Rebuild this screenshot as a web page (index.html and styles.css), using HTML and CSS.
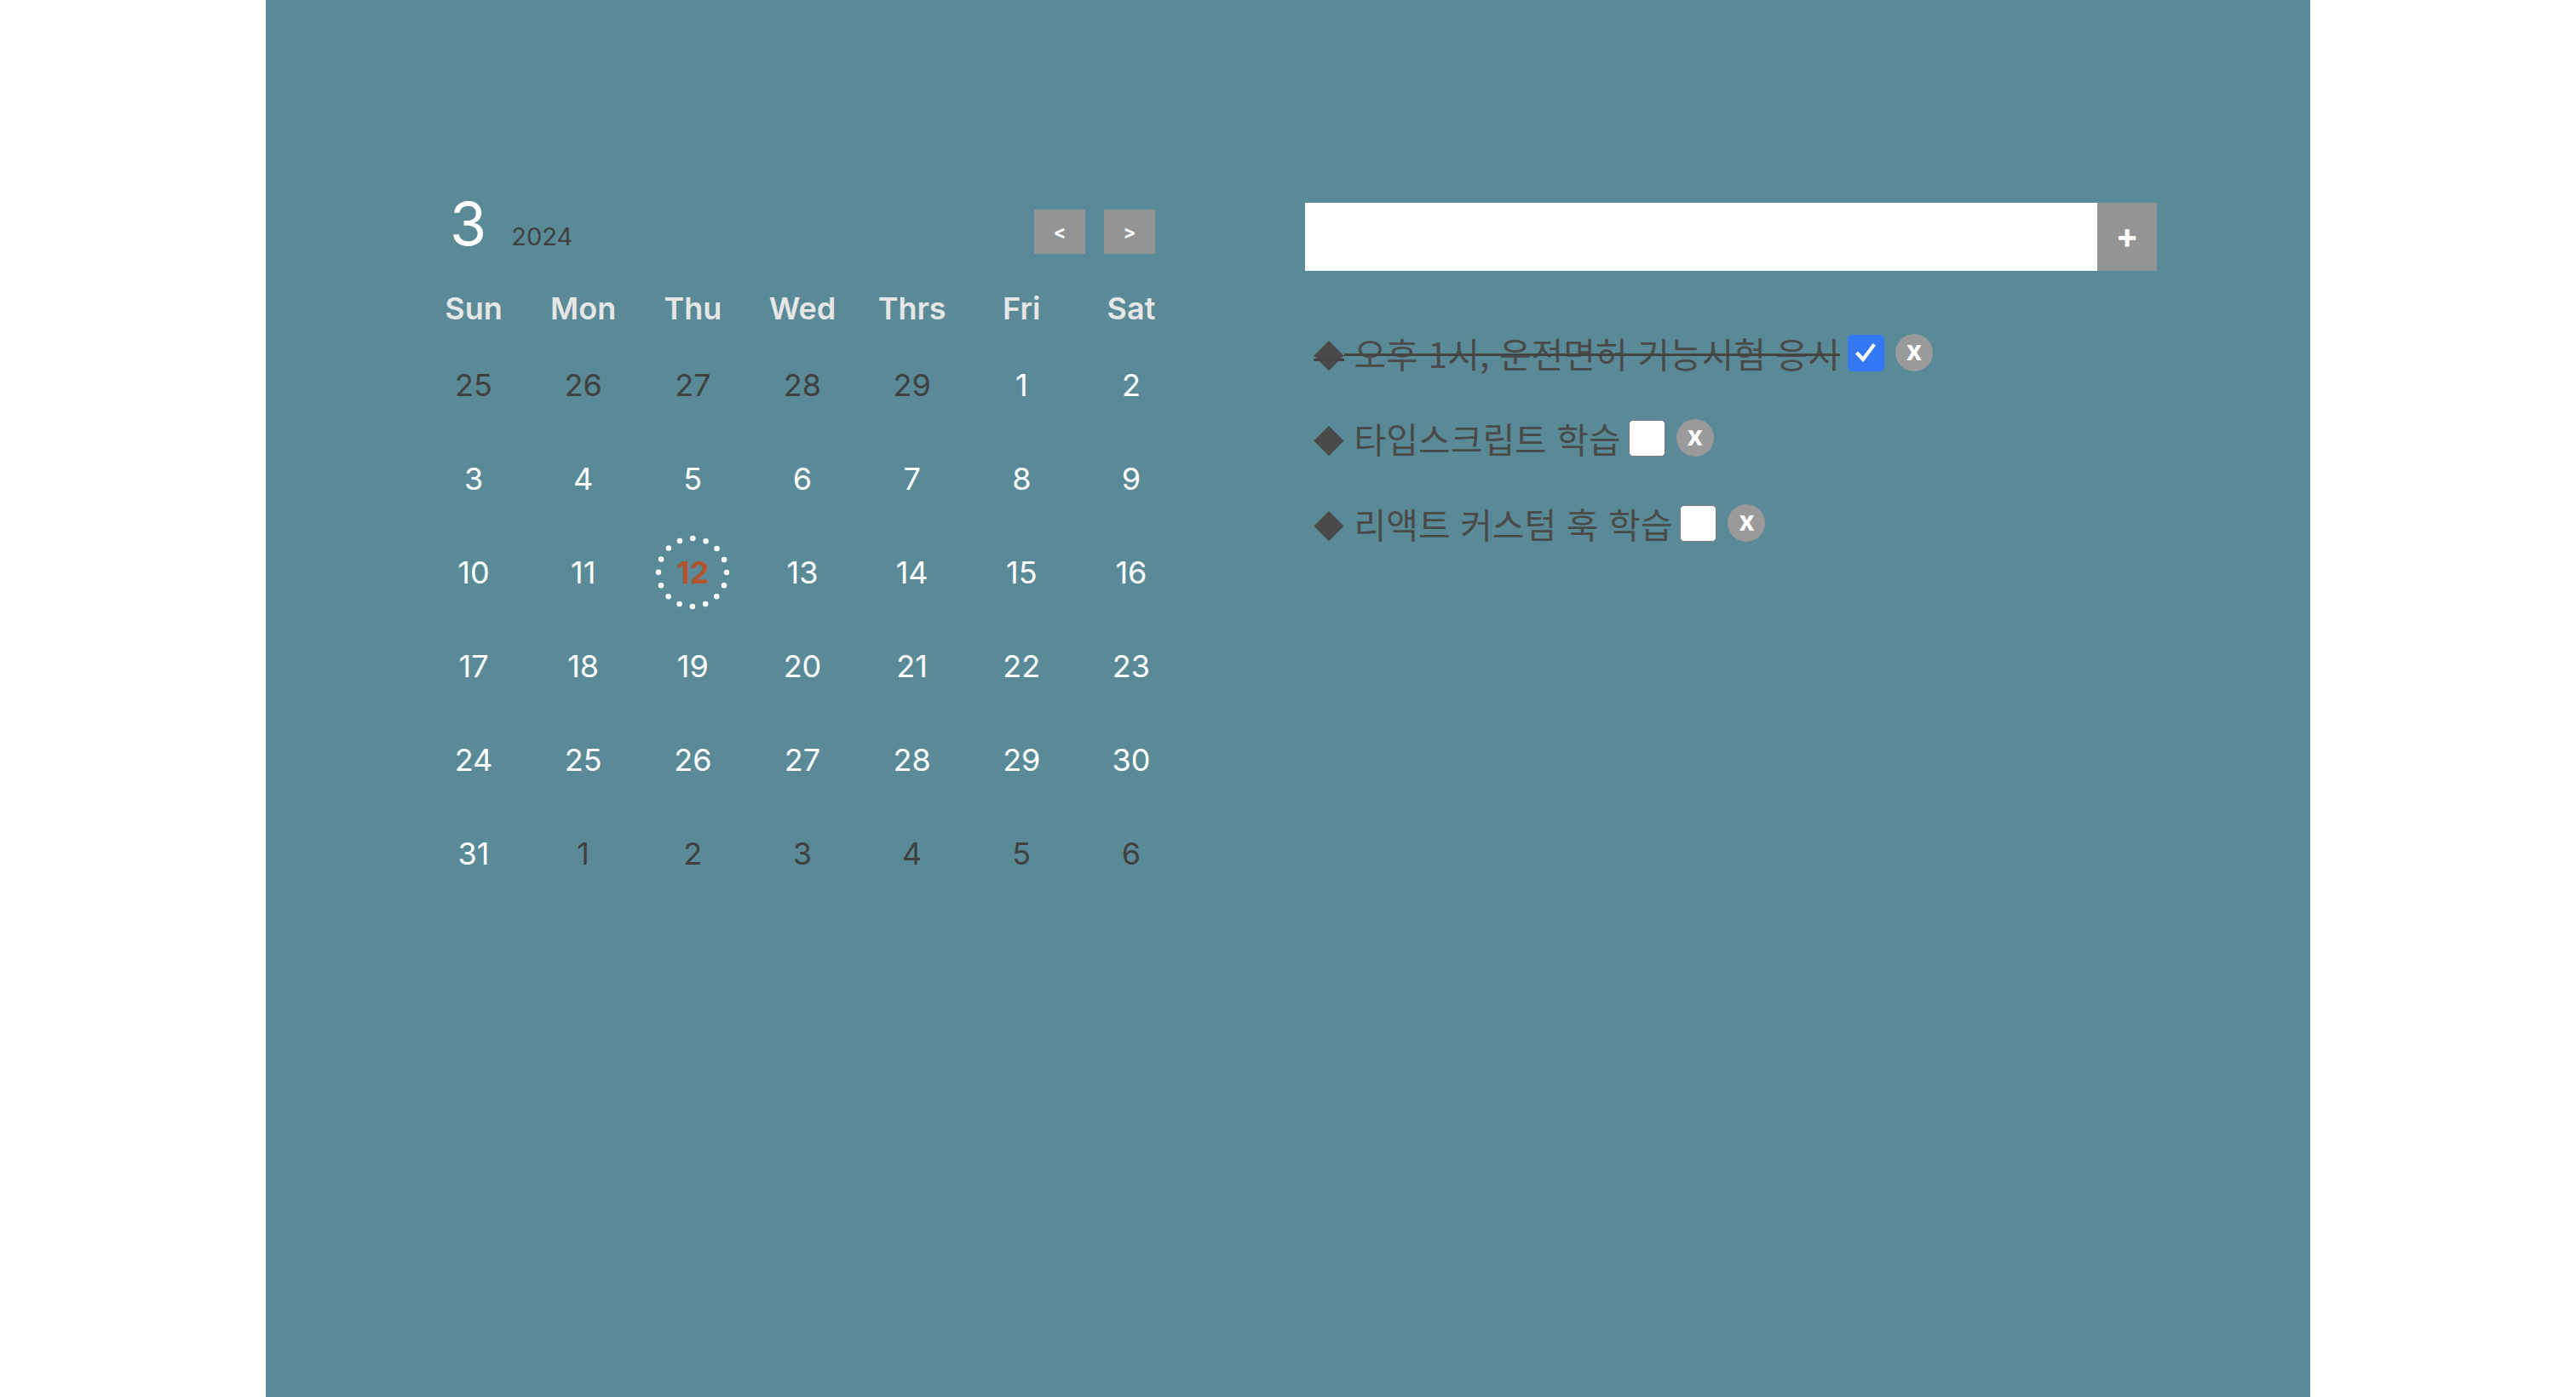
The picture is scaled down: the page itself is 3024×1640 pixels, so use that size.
FILE: index.html
```html
<!DOCTYPE html>
<html lang="ko">
<head>
<meta charset="utf-8">
<title>Calendar &amp; Todo</title>
<link rel="stylesheet" href="styles.css">
</head>
<body>
<main class="page">
  <section class="calendar">
    <div class="cal-header">
      <div class="cal-title"><span class="cal-month">3</span><span class="cal-year">2024</span></div>
      <div class="cal-nav">
        <button class="nav-btn" type="button">&lt;</button>
        <button class="nav-btn" type="button">&gt;</button>
      </div>
    </div>
    <div class="weekdays">
      <div class="cell">Sun</div><div class="cell">Mon</div><div class="cell">Thu</div><div class="cell">Wed</div><div class="cell">Thrs</div><div class="cell">Fri</div><div class="cell">Sat</div>
    </div>
    <div class="days">
      <div class="day other">25</div><div class="day other">26</div><div class="day other">27</div><div class="day other">28</div><div class="day other">29</div><div class="day">1</div><div class="day">2</div>
      <div class="day">3</div><div class="day">4</div><div class="day">5</div><div class="day">6</div><div class="day">7</div><div class="day">8</div><div class="day">9</div>
      <div class="day">10</div><div class="day">11</div>
      <div class="day today"><svg class="today-ring" width="88" height="88" viewBox="0 0 88 88"><circle cx="44" cy="44" r="40" fill="none" stroke="#ffffff" stroke-width="6.5" stroke-linecap="round" stroke-dasharray="0 15.708"/></svg><span class="today-num">12</span></div>
      <div class="day">13</div><div class="day">14</div><div class="day">15</div><div class="day">16</div>
      <div class="day">17</div><div class="day">18</div><div class="day">19</div><div class="day">20</div><div class="day">21</div><div class="day">22</div><div class="day">23</div>
      <div class="day">24</div><div class="day">25</div><div class="day">26</div><div class="day">27</div><div class="day">28</div><div class="day">29</div><div class="day">30</div>
      <div class="day">31</div><div class="day other">1</div><div class="day other">2</div><div class="day other">3</div><div class="day other">4</div><div class="day other">5</div><div class="day other">6</div>
    </div>
  </section>

  <section class="todo">
    <form class="todo-form">
      <input class="todo-input" type="text" aria-label="할 일">
      <button class="add-btn" type="button">+</button>
    </form>
    <ul class="todo-list">
      <li class="todo-item">
        <span class="todo-text done"><span class="bullet">◆</span> 오후 1시, 운전면허 기능시험 응시</span>
        <span class="check checked"><svg width="26" height="26" viewBox="0 0 26 26"><path d="M4 14.5 L10 21 L22 5" fill="none" stroke="#fff" stroke-width="4.2" stroke-linecap="square" stroke-linejoin="miter"/></svg></span>
        <button class="del-btn" type="button">x</button>
      </li>
      <li class="todo-item">
        <span class="todo-text"><span class="bullet">◆</span> 타입스크립트 학습</span>
        <span class="check"></span>
        <button class="del-btn" type="button">x</button>
      </li>
      <li class="todo-item">
        <span class="todo-text"><span class="bullet">◆</span> 리액트 커스텀 훅 학습</span>
        <span class="check"></span>
        <button class="del-btn" type="button">x</button>
      </li>
    </ul>
  </section>
</main>
</body>
</html>
```

FILE: styles.css
```css
* { box-sizing: border-box; }

html, body {
  margin: 0;
  padding: 0;
  background: #ffffff;
}

body {
  font-family: Inter, "Noto Sans", "Noto Sans CJK KR", sans-serif;
}

.page {
  width: 2400px;
  height: 1640px;
  margin: 0 auto;
  background: #5a8a97;
  display: flex;
  align-items: flex-start;
  padding: 228px 0 0 216px;
  gap: 176px;
}

/* ---------- calendar ---------- */
.calendar {
  width: 828px;
}

.cal-header {
  height: 70px;
  display: flex;
  justify-content: space-between;
  align-items: flex-end;
}

.cal-title {
  font-size: 70px;
  line-height: 1;
  color: #ffffff;
  white-space: nowrap;
}

.cal-month {
  font-weight: 400;
}

.cal-year {
  font-size: 29px;
  color: #404040;
  margin-left: 29px;
}

.cal-nav {
  display: flex;
  gap: 22px;
}

.nav-btn {
  width: 60px;
  height: 52px;
  border: none;
  padding: 0;
  background: #949494;
  color: #ffffff;
  font-family: Inter, sans-serif;
  font-weight: 700;
  font-size: 22px;
}

.weekdays,
.days {
  display: grid;
  grid-template-columns: repeat(7, 56px);
  justify-content: space-between;
}

.weekdays {
  margin-top: 41px;
  font-size: 36px;
  font-weight: 600;
  color: #e6e6e6;
  line-height: 47px;
}

.cell {
  display: flex;
  justify-content: center;
  white-space: nowrap;
}

.days {
  margin-top: 22px;
  row-gap: 22px;
  font-size: 36px;
  color: #ffffff;
}

.day {
  height: 88px;
  display: flex;
  align-items: center;
  justify-content: center;
  white-space: nowrap;
  position: relative;
}

.day.other {
  color: #404040;
}

.today-ring {
  position: absolute;
  left: 50%;
  top: 50%;
  margin: -44px 0 0 -44px;
}

.today-num {
  position: relative;
  color: #b0552f;
  font-weight: 700;
}

/* ---------- todo ---------- */
.todo {
  width: 1000px;
  margin-top: 10px;
}

.todo-form {
  display: flex;
  height: 80px;
  margin: 0;
}

.todo-input {
  flex: 1;
  border: none;
  outline: none;
  background: #ffffff;
  padding: 0 16px;
  font-size: 30px;
}

.add-btn {
  width: 70px;
  border: none;
  padding: 0 0 2px;
  background: #949494;
  color: #ffffff;
  font-family: Inter, sans-serif;
  font-size: 40px;
  font-weight: 700;
  line-height: 1;
}

.todo-list {
  list-style: none;
  margin: 66px 0 0;
  padding: 0 0 0 10px;
  display: flex;
  flex-direction: column;
  gap: 40px;
}

.todo-item {
  height: 60px;
  display: flex;
  align-items: center;
}

.todo-text {
  font-family: "Noto Sans CJK KR", sans-serif;
  font-size: 41px;
  color: #4a4a4a;
  white-space: nowrap;
}

.bullet {
  font-size: 36px;
}

.todo-text.done {
  text-decoration: line-through;
  text-decoration-thickness: 3px;
  text-decoration-color: #444444;
}

.check {
  width: 43px;
  height: 43px;
  margin-left: 9px;
  border-radius: 5px;
  background: #ffffff;
  border: 1.5px solid #7a7a7a;
  display: flex;
  align-items: center;
  justify-content: center;
  flex: none;
}

.check.checked {
  background: #3478f6;
  border: none;
}

.del-btn {
  width: 44px;
  height: 44px;
  margin-left: 13px;
  border: none;
  border-radius: 50%;
  padding: 0 0 4px;
  background: #9a9a9a;
  color: #ffffff;
  font-family: Inter, sans-serif;
  font-size: 32px;
  font-weight: 700;
  line-height: 1;
  flex: none;
}
```
